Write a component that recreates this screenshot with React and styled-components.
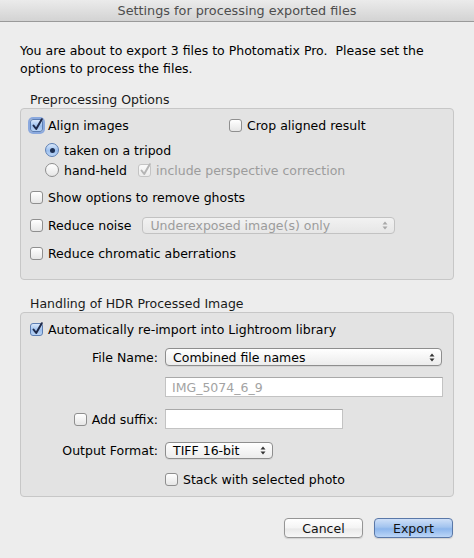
import React from "react";
import styled, { createGlobalStyle, css } from "styled-components";

const Global = createGlobalStyle`
  html, body { margin: 0; padding: 0; background: #ededed; }
  body { font-family: "DejaVu Sans", "Liberation Sans", sans-serif; font-size: 12.5px; color: #000; }
  * { box-sizing: border-box; }
`;

const Window = styled.div`
  width: 474px;
  height: 558px;
  display: flex;
  flex-direction: column;
  background: #ededed;
  overflow: hidden;
`;

const TitleBar = styled.div`
  height: 22px;
  flex: none;
  display: flex;
  align-items: center;
  justify-content: center;
  background: linear-gradient(#ebebeb, #d3d3d3);
  border-bottom: 1px solid #9a9a9a;
  color: #4d4d4d;
  font-size: 12.8px;
`;

const Body = styled.div`
  padding: 20px 20px 0 20px;
  display: flex;
  flex-direction: column;
`;

const Intro = styled.p`
  margin: 0;
  line-height: 18px;
  width: 430px;
`;

const SectionTitle = styled.div`
  margin-top: ${(p) => p.$mt}px;
  padding-left: 10px;
  height: 16px;
  line-height: 16px;
  color: #1a1a1a;
`;

const GroupBox = styled.div`
  border: 1px solid #c7c7c7;
  border-radius: 4px;
  background: #e3e3e3;
  padding: ${(p) => p.$pt}px 10px ${(p) => p.$pb}px 9px;
  display: flex;
  flex-direction: column;
`;

const Row = styled.div`
  display: flex;
  align-items: center;
  height: ${(p) => p.$h || 18}px;
  margin-top: ${(p) => p.$mt || 0}px;
  padding-left: ${(p) => p.$indent || 0}px;
`;

const Option = styled.label`
  display: inline-flex;
  align-items: center;
  gap: 5px;
  white-space: nowrap;
  color: ${(p) => (p.$disabled ? "#9c9c9c" : "#000")};
  width: ${(p) => (p.$w ? p.$w + "px" : "auto")};
  margin-left: ${(p) => p.$ml || 0}px;
`;

const Box = styled.span`
  position: relative;
  width: 13px;
  height: 13px;
  flex: none;
  border-radius: 3px;
  border: 1px solid ${(p) => (p.$on ? "#5d7fb4" : p.$disabled ? "#c4c4c4" : "#8f8f8f")};
  background: ${(p) =>
    p.$on
      ? "linear-gradient(#d9e8fb, #9dc0ee 55%, #bad4f5)"
      : p.$disabled
      ? "linear-gradient(#fafafa, #ececec)"
      : "linear-gradient(#ffffff, #e6e6e6)"};
  ${(p) =>
    p.$focus &&
    css`
      box-shadow: 0 0 0 2px rgba(110, 150, 220, 0.75);
    `}
  svg {
    position: absolute;
    left: 0;
    top: -3px;
    overflow: visible;
  }
`;

const Round = styled(Box)`
  border-radius: 50%;
  width: 14px;
  height: 14px;
  display: flex;
  align-items: center;
  justify-content: center;
`;

const Dot = styled.span`
  width: 5px;
  height: 5px;
  border-radius: 50%;
  background: #1d2f52;
`;

function CheckBox({ checked, disabled, focus }) {
  return (
    <Box $on={checked && !disabled} $disabled={disabled} $focus={focus}>
      {checked && (
        <svg width="13" height="15" viewBox="0 0 13 15">
          <path
            d="M2.5 8.5 L5.2 12 L10.8 2.2"
            fill="none"
            stroke={disabled ? "#b5b5b5" : "#1f2a4a"}
            strokeWidth="2"
            strokeLinecap="round"
            strokeLinejoin="round"
          />
        </svg>
      )}
    </Box>
  );
}

function Radio({ checked }) {
  return <Round $on={checked}>{checked && <Dot />}</Round>;
}

const PopupBox = styled.div`
  height: ${(p) => p.$h || 18}px;
  width: ${(p) => p.$w}px;
  margin-left: ${(p) => p.$ml || 0}px;
  display: flex;
  align-items: center;
  justify-content: space-between;
  padding: 0 6px 0 7px;
  border-radius: 4px;
  border: 1px solid ${(p) => (p.$disabled ? "#c2c2c2" : "#8e8e8e")};
  background: ${(p) =>
    p.$disabled ? "linear-gradient(#f2f2f2, #e6e6e6)" : "linear-gradient(#ffffff, #ececec)"};
  color: ${(p) => (p.$disabled ? "#9c9c9c" : "#000")};
  box-shadow: ${(p) => (p.$disabled ? "none" : "0 1px 0 rgba(0,0,0,0.06)")};
  white-space: nowrap;
`;

function Arrows({ disabled }) {
  const c = disabled ? "#a8a8a8" : "#333";
  return (
    <svg width="6" height="9" viewBox="0 0 6 9">
      <path d="M0.5 3.5 L3 0.5 L5.5 3.5 Z" fill={c} />
      <path d="M0.5 5.5 L3 8.5 L5.5 5.5 Z" fill={c} />
    </svg>
  );
}

function Popup({ label, w, h, ml, disabled }) {
  return (
    <PopupBox $w={w} $h={h} $ml={ml} $disabled={disabled}>
      <span>{label}</span>
      <Arrows disabled={disabled} />
    </PopupBox>
  );
}

const TextField = styled.div`
  height: 20px;
  width: ${(p) => p.$w}px;
  border: 1px solid #c3c3c3;
  border-top-color: #a9a9a9;
  background: #fff;
  display: flex;
  align-items: center;
  padding-left: 6px;
  color: #a3a3a3;
  white-space: nowrap;
`;

const FieldRow = styled.div`
  display: grid;
  grid-template-columns: 128px auto;
  column-gap: 7px;
  align-items: center;
  height: ${(p) => p.$h || 18}px;
  margin-top: ${(p) => p.$mt || 0}px;
`;

const FieldLabel = styled.div`
  display: flex;
  justify-content: flex-end;
  align-items: center;
  gap: 5px;
  white-space: nowrap;
`;

const Buttons = styled.div`
  display: flex;
  justify-content: flex-end;
  gap: 11px;
  margin-top: 21px;
  padding-right: 1px;
`;

const Button = styled.div`
  width: 79px;
  height: 20px;
  border-radius: 4px;
  display: flex;
  align-items: center;
  justify-content: center;
  border: 1px solid ${(p) => (p.$primary ? "#5a78a8" : "#959595")};
  background: ${(p) =>
    p.$primary
      ? "linear-gradient(#cfe0f8, #a3c4ef 45%, #8db6ec 55%, #bcd6f7)"
      : "linear-gradient(#ffffff, #f4f4f4 50%, #e9e9e9 55%, #f7f7f7)"};
  box-shadow: 0 1px 1px rgba(0, 0, 0, 0.12);
  color: #111;
`;

export default function App() {
  return (
    <>
      <Global />
      <Window>
        <TitleBar>Settings for processing exported files</TitleBar>
        <Body>
          <Intro>
            You are about to export 3 files to Photomatix Pro.&nbsp; Please set the options to
            process the files.
          </Intro>

          <SectionTitle $mt={14}>Preprocessing Options</SectionTitle>
          <GroupBox $pt={7} $pb={17}>
            <Row>
              <Option $w={199}>
                <CheckBox checked focus />
                Align images
              </Option>
              <Option>
                <CheckBox />
                Crop aligned result
              </Option>
            </Row>
            <Row $mt={7} $indent={15}>
              <Option>
                <Radio checked />
                taken on a tripod
              </Option>
            </Row>
            <Row $mt={2} $indent={15}>
              <Option>
                <Radio />
                hand-held
              </Option>
              <Option $disabled $ml={11}>
                <CheckBox checked disabled />
                include perspective correction
              </Option>
            </Row>
            <Row $mt={9}>
              <Option>
                <CheckBox />
                Show options to remove ghosts
              </Option>
            </Row>
            <Row $mt={10}>
              <Option>
                <CheckBox />
                Reduce noise
              </Option>
              <Popup label="Underexposed image(s) only" w={253} h={17} ml={11} disabled />
            </Row>
            <Row $mt={10}>
              <Option>
                <CheckBox />
                Reduce chromatic aberrations
              </Option>
            </Row>
          </GroupBox>

          <SectionTitle $mt={16}>Handling of HDR Processed Image</SectionTitle>
          <GroupBox $pt={7} $pb={8}>
            <Row>
              <Option>
                <CheckBox checked />
                Automatically re-import into Lightroom library
              </Option>
            </Row>
            <FieldRow $mt={10}>
              <FieldLabel>File Name:</FieldLabel>
              <Popup label="Combined file names" w={277} />
            </FieldRow>
            <FieldRow $mt={11} $h={20}>
              <span />
              <TextField $w={278}>IMG_5074_6_9</TextField>
            </FieldRow>
            <FieldRow $mt={12} $h={20}>
              <FieldLabel>
                <CheckBox />
                Add suffix:
              </FieldLabel>
              <TextField $w={178} />
            </FieldRow>
            <FieldRow $mt={13} $h={17}>
              <FieldLabel>Output Format:</FieldLabel>
              <Popup label="TIFF 16-bit" w={108} h={17} />
            </FieldRow>
            <FieldRow $mt={11}>
              <span />
              <Option>
                <CheckBox />
                Stack with selected photo
              </Option>
            </FieldRow>
          </GroupBox>

          <Buttons>
            <Button>Cancel</Button>
            <Button $primary>Export</Button>
          </Buttons>
        </Body>
      </Window>
    </>
  );
}
